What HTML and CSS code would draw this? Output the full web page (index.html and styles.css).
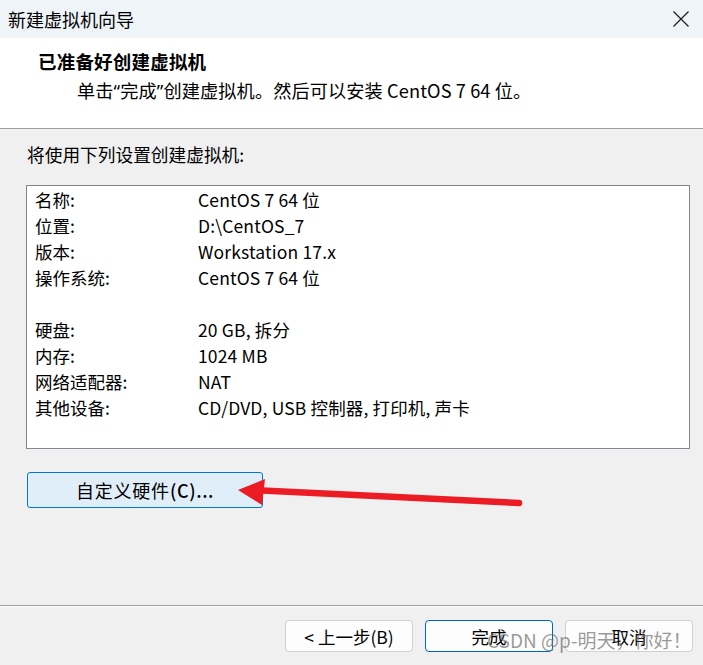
FILE: index.html
```html
<!DOCTYPE html>
<html lang="zh-CN">
<head>
<meta charset="utf-8">
<title>新建虚拟机向导</title>
<link rel="stylesheet" href="styles.css">
</head>
<body>
<div class="window">
  <div class="titlebar">
    <span class="title">新建虚拟机向导</span>
    <svg class="close" width="16" height="16" viewBox="0 0 16 16"><path d="M0.5 0.5 L15.5 15.5 M15.5 0.5 L0.5 15.5" stroke="#1a1a1a" stroke-width="1.2" fill="none"/></svg>
  </div>
  <div class="header">
    <div class="h-title">已准备好创建虚拟机</div>
    <div class="h-sub">单击<span class="q">“</span>完成<span class="q">”</span>创建虚拟机。然后可以安装 CentOS 7 64 位。</div>
  </div>
  <div class="body">
    <div class="intro">将使用下列设置创建虚拟机:</div>
    <div class="summary">
      <div class="row"><span class="k">名称:</span><span class="v">CentOS 7 64 位</span></div>
      <div class="row"><span class="k">位置:</span><span class="v">D:\CentOS_7</span></div>
      <div class="row"><span class="k">版本:</span><span class="v">Workstation 17.x</span></div>
      <div class="row"><span class="k">操作系统:</span><span class="v">CentOS 7 64 位</span></div>
      <div class="row blank"></div>
      <div class="row"><span class="k">硬盘:</span><span class="v">20 GB, 拆分</span></div>
      <div class="row"><span class="k">内存:</span><span class="v">1024 MB</span></div>
      <div class="row"><span class="k">网络适配器:</span><span class="v">NAT</span></div>
      <div class="row"><span class="k">其他设备:</span><span class="v">CD/DVD, USB 控制器, 打印机, 声卡</span></div>
    </div>
    <button class="custom">自定义硬件<span class="acc">(C)...</span></button>
  </div>
  <div class="footer">
    <button class="btn">&lt; 上一步(B)</button>
    <button class="btn default">完成</button>
    <button class="btn">取消</button>
  </div>
  <svg class="arrow" width="703" height="665" viewBox="0 0 703 665">
    <path d="M262 490.5 L519 503" stroke="#ec1c24" stroke-width="6.5" stroke-linecap="round" fill="none"/>
    <polygon points="238,490 265,479 262,505" fill="#ec1c24"/>
  </svg>
  <div class="watermark">CSDN @p-明天，你好！</div>
</div>
</body>
</html>
```
FILE: styles.css
```css
* { box-sizing: border-box; }
html, body { margin: 0; padding: 0; }
body {
  width: 703px;
  height: 665px;
  overflow: hidden;
  background: #f0f0f0;
  font-family: "Noto Sans CJK SC", "Noto Sans", sans-serif;
  color: #000;
}
.window {
  position: relative;
  width: 703px;
  height: 665px;
  display: flex;
  flex-direction: column;
}
.titlebar {
  height: 38px;
  background: #eff4f9;
  display: flex;
  align-items: center;
  justify-content: space-between;
  padding: 0 14px 0 8px;
}
.title { font-size: 18px; line-height: 24px; }
.close { display: block; }
.header {
  height: 91px;
  background: #fff;
  border-bottom: 1px solid #a0a0a0;
  padding: 10px 0 0 38px;
}
.h-title { font-size: 18.5px; font-weight: bold; line-height: 26px; letter-spacing: 0.2px; }
.h-sub { font-size: 18.2px; line-height: 26px; margin-top: 3px; padding-left: 39px; letter-spacing: 0.1px; }
.q { font-family: "Noto Sans", sans-serif; }
.body {
  flex: 1;
  padding: 12px 0 0 26px;
  border-bottom: 1px solid #a0a0a0;
  box-shadow: 0 1px 0 #fff;
}
.intro { font-size: 17.7px; line-height: 26px; padding-left: 1px; }
.summary {
  margin-top: 18px;
  width: 664px;
  height: 264px;
  background: #fff;
  border: 1px solid #828790;
  padding: 1px 0 0 8px;
}
.row {
  display: flex;
  height: 26px;
  line-height: 26px;
  font-size: 17.5px;
}
.k { width: 163px; }
.v { letter-spacing: 0.15px; }
.custom {
  display: block;
  margin: 23px 0 0 1px;
  width: 236px;
  height: 36px;
  background: #e0eef9;
  border: 1px solid #0078d4;
  border-radius: 3px;
  font-family: inherit;
  font-size: 18px;
  letter-spacing: 0.8px;
  color: #000;
  padding: 0;
}
.acc { font-weight: 500; letter-spacing: 0.6px; }
.footer {
  height: 59px;
  display: flex;
  justify-content: flex-end;
  gap: 12px;
  padding: 14px 10px 0 0;
}
.btn {
  width: 128px;
  height: 32px;
  background: #fdfdfd;
  border: 1px solid #d0d0d0;
  border-radius: 4px;
  font-family: inherit;
  font-size: 17.5px;
  color: #000;
  padding: 0;
}
.btn.default { border: 1px solid #0067c0; }
.arrow { position: absolute; left: 0; top: 0; pointer-events: none; }
.watermark {
  position: absolute;
  left: 487px;
  top: 628px;
  font-size: 19px;
  line-height: 24px;
  color: rgba(110, 110, 110, 0.7);
  white-space: nowrap;
}
```
